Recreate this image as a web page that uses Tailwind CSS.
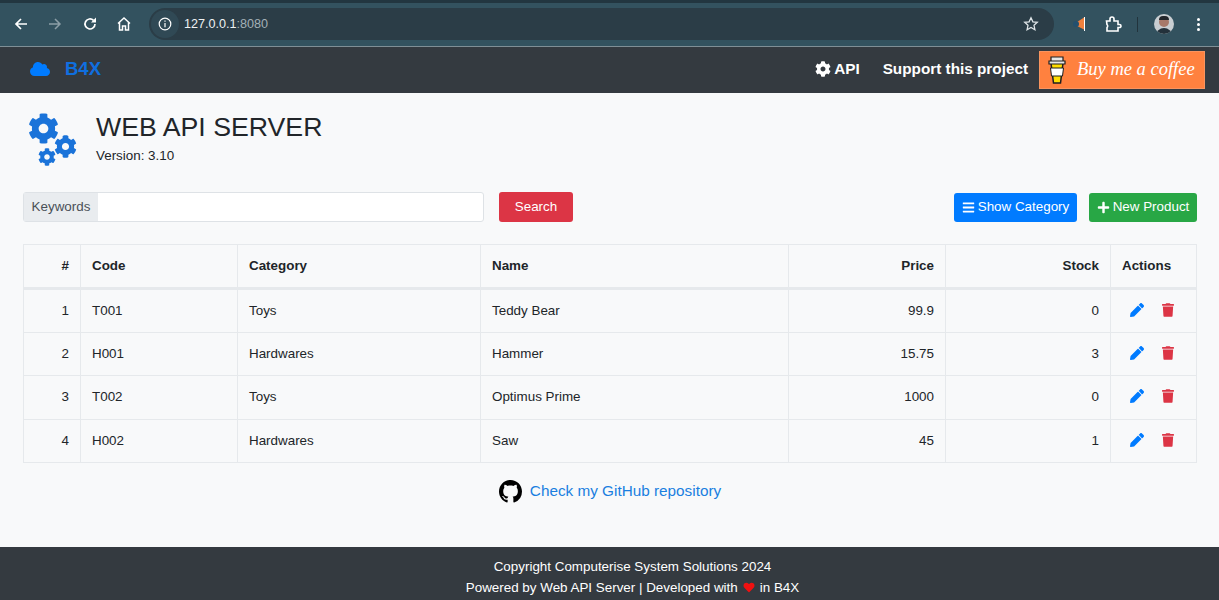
<!DOCTYPE html>
<html lang="en">

<head>
    <meta charset="UTF-8" />
    <title>Web API Server</title>
    <script src="https://cdn.jsdelivr.net/npm/@tailwindcss/browser@4"></script>
</head>

<body class="h-[600px] w-[1219px] overflow-hidden bg-[#f8f9fa] font-['Liberation_Sans',Arial,sans-serif] text-[13.400px] text-[#212529]">

    <svg class="hidden">
        <symbol id="cog" viewBox="0 0 512 512"><path fill="currentColor" d="M487.4 315.7l-42.6-24.6c4.3-23.2 4.3-47 0-70.2l42.6-24.6c4.9-2.8 7.1-8.6 5.5-14-11.1-35.6-30-67.8-54.7-94.6-3.8-4.1-10-5.1-14.8-2.3L380.8 110c-17.9-15.4-38.5-27.3-60.8-35.1V25.8c0-5.6-3.9-10.5-9.4-11.7-36.7-8.2-74.3-7.8-109.2 0-5.5 1.2-9.4 6.1-9.4 11.7V75c-22.2 7.9-42.8 19.8-60.8 35.1L88.7 85.5c-4.9-2.8-11-1.9-14.8 2.3-24.7 26.7-43.6 58.9-54.7 94.6-1.7 5.4.6 11.2 5.5 14L67.3 221c-4.3 23.2-4.3 47 0 70.2l-42.6 24.6c-4.9 2.8-7.1 8.6-5.5 14 11.1 35.6 30 67.8 54.7 94.6 3.8 4.1 10 5.1 14.8 2.3l42.6-24.6c17.9 15.4 38.5 27.3 60.8 35.1v49.2c0 5.6 3.9 10.5 9.4 11.7 36.7 8.2 74.3 7.8 109.2 0 5.5-1.2 9.4-6.1 9.4-11.7v-49.2c22.2-7.9 42.8-19.8 60.8-35.1l42.6 24.6c4.9 2.8 11 1.9 14.8-2.3 24.7-26.7 43.6-58.9 54.7-94.6 1.5-5.5-.7-11.3-5.6-14.1zM256 336c-44.1 0-80-35.9-80-80s35.9-80 80-80 80 35.9 80 80-35.9 80-80 80z"/></symbol>
        <symbol id="pencil" viewBox="0 0 512 512"><path fill="currentColor" d="M497.9 142.1l-46.1 46.1c-4.7 4.7-12.3 4.7-17 0l-111-111c-4.7-4.7-4.7-12.3 0-17l46.1-46.1c18.7-18.7 49.1-18.7 67.9 0l60.1 60.1c18.8 18.7 18.8 49.1 0 67.9zM284.2 99.8L21.6 362.4.4 483.9c-2.9 16.4 11.4 30.6 27.8 27.8l121.5-21.3 262.6-262.6c4.7-4.7 4.7-12.3 0-17l-111-111c-4.8-4.7-12.4-4.7-17.1 0z"/></symbol>
        <symbol id="trash" viewBox="0 0 448 512"><path fill="currentColor" d="M432 32H312l-9.4-18.7A24 24 0 0 0 281.1 0H166.8a23.72 23.72 0 0 0-21.4 13.3L136 32H16A16 16 0 0 0 0 48v32a16 16 0 0 0 16 16h416a16 16 0 0 0 16-16V48a16 16 0 0 0-16-16zM53.2 467a48 48 0 0 0 47.9 45h245.8a48 48 0 0 0 47.9-45L416 128H32z"/></symbol>
    </svg>

    <!-- browser toolbar -->
    <div class="relative flex h-[47px] items-center border-b border-[#7f8f96] bg-[#33525f] pt-[2px]">
        <div class="absolute left-0 top-0 h-[3px] w-full bg-[#223640]"></div>
        <div class="flex w-[149px] items-center text-white">
            <svg class="ml-[13px] h-[16px] w-[16px]" viewBox="0 0 16 16" fill="none" stroke="currentColor" stroke-width="1.7"><path d="M14 8H3M8 3L3 8l5 5" /></svg>
            <svg class="ml-[18px] h-[16px] w-[16px] text-[#8c9ea6]" viewBox="0 0 16 16" fill="none" stroke="currentColor" stroke-width="1.5"><path d="M2 8h11M8 3l5 5-5 5" /></svg>
            <svg class="ml-[19px] h-[16px] w-[16px]" viewBox="0 0 16 16" fill="none" stroke="currentColor" stroke-width="1.7"><path d="M13 8a5 5 0 1 1-1.5-3.6" /><path fill="currentColor" stroke="none" d="M14 1.5v5h-5z" /></svg>
            <svg class="ml-[18px] h-[16px] w-[16px]" viewBox="0 0 16 16" fill="none" stroke="currentColor" stroke-width="1.5"><path d="M2 7.5L8 2l6 5.5M3.5 6.5V14h3v-4h3v4h3V6.500" /></svg>
        </div>
        <div class="flex h-[32px] w-[905px] items-center rounded-full bg-[#2b3d47] text-[12.600px]">
            <div class="flex h-[28px] w-[28px] ml-[2px] items-center justify-center rounded-full bg-[#33525f]/60">
                <svg class="h-[14px] w-[14px] text-white" viewBox="0 0 14 14" fill="none" stroke="currentColor" stroke-width="1.2"><circle cx="7" cy="7" r="5.800" /><path d="M7 6v4.200M7 3.500v1.300" /></svg>
            </div>
            <span class="ml-[5px] text-[#eef2f3]">127.0.0.1<span class="text-[#a3b0b6]">:8080</span></span>
            <svg class="ml-auto mr-[15px] h-[16px] w-[16px] text-[#dfe5e8]" viewBox="0 0 16 16" fill="none" stroke="currentColor" stroke-width="1.3"><path d="M8 1.800l1.900 4 4.400.5-3.300 3 .9 4.400L8 11.500l-3.900 2.200.9-4.400-3.300-3 4.400-.5z" /></svg>
        </div>
        <div class="flex flex-1 items-center">
            <svg class="ml-[18px] h-[16px] w-[16px]" viewBox="0 0 16 16"><path fill="#f0803c" d="M5 6l7-4.500v12L5 10z" /><circle cx="4" cy="8" r="3" fill="#24506e" /><path d="M12.500 1v14" stroke="#fff" stroke-width="1" /></svg>
            <svg class="ml-[16px] h-[18px] w-[18px] text-white" viewBox="0 0 18 18" fill="none" stroke="currentColor" stroke-width="1.600"><path d="M2.500 6h3.500V4a2 2 0 0 1 4 0v2h4v3.500h1.500a1.500 1.500 0 0 1 0 3H14V16H3v-3.500a2 2 0 0 0 0-3z" /></svg>
            <div class="ml-[15px] h-[15px] w-[1px] bg-[#22343d]"></div>
            <div class="relative ml-[16px] h-[20px] w-[20px] overflow-hidden rounded-full bg-[#c9ced2]">
                <div class="absolute left-[5px] top-[3px] h-[10px] w-[10px] rounded-full bg-[#a8796a]"></div>
                <div class="absolute left-[5px] top-[2px] h-[4px] w-[10px] rounded-t-full bg-[#23262b]"></div>
                <div class="absolute left-[2px] top-[14px] h-[8px] w-[16px] rounded-t-full bg-[#23313b]"></div>
            </div>
            <div class="ml-[23px] flex flex-col gap-[2px]">
                <div class="h-[3px] w-[3px] rounded-full bg-white"></div>
                <div class="h-[3px] w-[3px] rounded-full bg-white"></div>
                <div class="h-[3px] w-[3px] rounded-full bg-white"></div>
            </div>
        </div>
    </div>

    <!-- navbar -->
    <nav class="flex h-[46px] items-center bg-[#343a40] pb-[2px] pl-[30px] pr-[14px]">
        <svg class="h-[16px] w-[20px] text-[#007bff]" viewBox="0 0 640 512"><path fill="currentColor" d="M537.6 226.6c4.1-10.700 6.400-22.400 6.400-34.600 0-53-43-96-96-96-19.700 0-38.100 6-53.300 16.200C367 64.200 315.300 32 256 32c-88.400 0-160 71.600-160 160 0 2.700.1 5.400.2 8.100C40.200 219.800 0 273.200 0 336c0 79.500 64.500 144 144 144h368c70.700 0 128-57.300 128-128 0-61.900-44-113.600-102.400-125.400z" /></svg>
        <span class="ml-[15px] text-[18.500px] font-bold text-[#0f6fe0]">B4X</span>
        <a class="ml-auto flex items-center text-[15.300px] font-bold text-white">
            <svg class="mr-[3px] h-[16px] w-[16px]"><use href="#cog" /></svg>API
        </a>
        <span class="ml-[23px] text-[15.300px] font-bold text-white">Support this project</span>
        <div class="mt-[2px] ml-[11px] flex h-[38px] w-[166px] items-center border border-[#e0e0e0]/20 bg-[#ff813f] pl-[7px]">
            <svg class="h-[30px] w-[20px]" viewBox="0 0 20 30">
                <path d="M4 8l2.500 20h7L16 8z" fill="#ffdd00" stroke="#1f1f1f" stroke-width="1.500" />
                <path d="M3.500 13h13l-1 8h-11z" fill="#fff" stroke="#1f1f1f" stroke-width="1" />
                <path d="M2 6h16v3H2zM4 2h12v4H4z" fill="#e6e6e6" stroke="#1f1f1f" stroke-width="1.200" />
            </svg>
            <span class="ml-[10px] whitespace-nowrap font-['Liberation_Serif',serif] text-[18.500px] italic text-white">Buy me a coffee</span>
        </div>
    </nav>

    <!-- page heading -->
    <header class="flex px-[23px] pt-[18px]">
        <svg class="h-[58px] w-[56px] text-[#1a73d9]" viewBox="0 0 56 58">
            <use href="#cog" x="5" y="2" width="31" height="31" />
            <use href="#cog" x="31" y="24" width="23" height="23" />
            <use href="#cog" x="15" y="37" width="18" height="18" />
        </svg>
        <div class="ml-[17px]">
            <h1 class="text-[26.700px] leading-[32px] text-[#212529]">WEB API SERVER</h1>
            <p class="mt-[3px] leading-[20px]">Version: 3.10</p>
        </div>
    </header>

    <!-- toolbar -->
    <div class="mt-[23px] flex items-center pl-[23px] pr-[22px]">
        <div class="flex h-[30px] w-[461px] rounded-[3px] border border-[#dee2e6] bg-white">
            <span class="flex w-[74px] items-center justify-center bg-[#e9ecef] text-[#495057]">Keywords</span>
        </div>
        <button class="ml-[15px] h-[30px] w-[74px] rounded-[3px] bg-[#dc3545] text-white">Search</button>
        <button class="ml-auto flex h-[29px] w-[123px] items-center justify-center rounded-[3px] bg-[#007bff] text-white">
            <svg class="mr-[3px] h-[13px] w-[13px]" viewBox="0 0 448 512"><path fill="currentColor" d="M16 132h416c8.837 0 16-7.163 16-16V76c0-8.837-7.163-16-16-16H16C7.163 60 0 67.163 0 76v40c0 8.837 7.163 16 16 16zm0 160h416c8.837 0 16-7.163 16-16v-40c0-8.837-7.163-16-16-16H16c-8.837 0-16 7.163-16 16v40c0 8.837 7.163 16 16 16zm0 160h416c8.837 0 16-7.163 16-16v-40c0-8.837-7.163-16-16-16H16c-8.837 0-16 7.163-16 16v40c0 8.837 7.163 16 16 16z" /></svg>Show Category
        </button>
        <button class="ml-[12px] flex h-[29px] w-[108px] items-center justify-center rounded-[3px] bg-[#28a745] text-white">
            <svg class="mr-[3px] h-[13px] w-[13px]" viewBox="0 0 448 512"><path fill="currentColor" d="M416 208H272V64c0-17.670-14.330-32-32-32h-32c-17.670 0-32 14.330-32 32v144H32c-17.670 0-32 14.330-32 32v32c0 17.670 14.330 32 32 32h144v144c0 17.670 14.330 32 32 32h32c17.670 0 32-14.330 32-32V304h144c17.670 0 32-14.330 32-32v-32c0-17.670-14.330-32-32-32z" /></svg>New Product
        </button>
    </div>

    <!-- products -->
    <div class="mt-[22px] px-[23px]">
        <table class="w-[1173px] table-fixed border-collapse">
            <colgroup>
                <col class="w-[57px]" />
                <col class="w-[157px]" />
                <col class="w-[243px]" />
                <col class="w-[308px]" />
                <col class="w-[157px]" />
                <col class="w-[165px]" />
                <col class="w-[86px]" />
            </colgroup>
            <thead>
                <tr class="h-[44px] border-b-[3px] border-[#dee2e6] font-bold">
                    <th class="border border-b-[3px] border-[#e6e9ec] px-[11px] text-right">#</th>
                    <th class="border border-b-[3px] border-[#e6e9ec] px-[11px] text-left">Code</th>
                    <th class="border border-b-[3px] border-[#e6e9ec] px-[11px] text-left">Category</th>
                    <th class="border border-b-[3px] border-[#e6e9ec] px-[11px] text-left">Name</th>
                    <th class="border border-b-[3px] border-[#e6e9ec] px-[11px] text-right">Price</th>
                    <th class="border border-b-[3px] border-[#e6e9ec] px-[11px] text-right">Stock</th>
                    <th class="border border-b-[3px] border-[#e6e9ec] px-[11px] text-left">Actions</th>
                </tr>
            </thead>
            <tbody>
                <tr class="h-[43.500px]">
                    <td class="border border-[#e6e9ec] px-[11px] text-right">1</td>
                    <td class="border border-[#e6e9ec] px-[11px]">T001</td>
                    <td class="border border-[#e6e9ec] px-[11px]">Toys</td>
                    <td class="border border-[#e6e9ec] px-[11px]">Teddy Bear</td>
                    <td class="border border-[#e6e9ec] px-[11px] text-right">99.9</td>
                    <td class="border border-[#e6e9ec] px-[11px] text-right">0</td>
                    <td class="border border-[#e6e9ec] px-[11px]">
                        <div class="flex items-center pb-[2px] pl-[8px]">
                            <svg class="h-[14px] w-[14px] text-[#007bff]"><use href="#pencil" /></svg>
                            <svg class="ml-[18px] h-[14px] w-[12px] text-[#dc3545]"><use href="#trash" /></svg>
                        </div>
                    </td>
                </tr>
                <tr class="h-[43.500px]">
                    <td class="border border-[#e6e9ec] px-[11px] text-right">2</td>
                    <td class="border border-[#e6e9ec] px-[11px]">H001</td>
                    <td class="border border-[#e6e9ec] px-[11px]">Hardwares</td>
                    <td class="border border-[#e6e9ec] px-[11px]">Hammer</td>
                    <td class="border border-[#e6e9ec] px-[11px] text-right">15.75</td>
                    <td class="border border-[#e6e9ec] px-[11px] text-right">3</td>
                    <td class="border border-[#e6e9ec] px-[11px]">
                        <div class="flex items-center pb-[2px] pl-[8px]">
                            <svg class="h-[14px] w-[14px] text-[#007bff]"><use href="#pencil" /></svg>
                            <svg class="ml-[18px] h-[14px] w-[12px] text-[#dc3545]"><use href="#trash" /></svg>
                        </div>
                    </td>
                </tr>
                <tr class="h-[43.500px]">
                    <td class="border border-[#e6e9ec] px-[11px] text-right">3</td>
                    <td class="border border-[#e6e9ec] px-[11px]">T002</td>
                    <td class="border border-[#e6e9ec] px-[11px]">Toys</td>
                    <td class="border border-[#e6e9ec] px-[11px]">Optimus Prime</td>
                    <td class="border border-[#e6e9ec] px-[11px] text-right">1000</td>
                    <td class="border border-[#e6e9ec] px-[11px] text-right">0</td>
                    <td class="border border-[#e6e9ec] px-[11px]">
                        <div class="flex items-center pb-[2px] pl-[8px]">
                            <svg class="h-[14px] w-[14px] text-[#007bff]"><use href="#pencil" /></svg>
                            <svg class="ml-[18px] h-[14px] w-[12px] text-[#dc3545]"><use href="#trash" /></svg>
                        </div>
                    </td>
                </tr>
                <tr class="h-[43.500px]">
                    <td class="border border-[#e6e9ec] px-[11px] text-right">4</td>
                    <td class="border border-[#e6e9ec] px-[11px]">H002</td>
                    <td class="border border-[#e6e9ec] px-[11px]">Hardwares</td>
                    <td class="border border-[#e6e9ec] px-[11px]">Saw</td>
                    <td class="border border-[#e6e9ec] px-[11px] text-right">45</td>
                    <td class="border border-[#e6e9ec] px-[11px] text-right">1</td>
                    <td class="border border-[#e6e9ec] px-[11px]">
                        <div class="flex items-center pb-[2px] pl-[8px]">
                            <svg class="h-[14px] w-[14px] text-[#007bff]"><use href="#pencil" /></svg>
                            <svg class="ml-[18px] h-[14px] w-[12px] text-[#dc3545]"><use href="#trash" /></svg>
                        </div>
                    </td>
                </tr>
            </tbody>
        </table>
    </div>

    <!-- repo link -->
    <div class="mt-[16px] flex h-[24px] items-center justify-center pl-[1px]">
        <svg class="mr-[8px] h-[23px] w-[23px] text-black" viewBox="0 0 16 16"><path fill="currentColor" d="M8 0C3.580 0 0 3.580 0 8c0 3.540 2.290 6.530 5.470 7.590.4.070.55-.17.55-.38 0-.19-.01-.82-.01-1.490-2.010.37-2.530-.49-2.690-.94-.09-.23-.48-.94-.82-1.130-.28-.15-.68-.52-.01-.53.63-.01 1.080.58 1.230.82.72 1.210 1.870.87 2.330.66.070-.52.28-.87.51-1.070-1.780-.2-3.640-.89-3.640-3.950 0-.87.31-1.590.82-2.150-.08-.2-.36-1.020.08-2.120 0 0 .67-.21 2.200.82.64-.18 1.320-.27 2-.27.68 0 1.360.09 2 .27 1.530-1.040 2.200-.82 2.200-.82.44 1.100.16 1.920.08 2.120.51.56.82 1.270.82 2.150 0 3.070-1.870 3.750-3.650 3.950.29.25.54.73.54 1.480 0 1.070-.01 1.930-.01 2.200 0 .21.15.46.55.38A8.013 8.013 0 0016 8c0-4.420-3.580-8-8-8z" /></svg>
        <a class="text-[15.300px] text-[#1a7fe0]">Check my GitHub repository</a>
    </div>

    <!-- footer -->
    <footer class="fixed bottom-0 left-0 flex h-[53px] w-full flex-col items-center justify-center bg-[#343a40] pl-[46px] pt-[8px] text-[13.400px] leading-[20.500px] text-white">
        <p>Copyright Computerise System Solutions 2024</p>
        <p class="flex items-center">Powered by Web API Server | Developed with
            <svg class="mx-[5px] h-[11px] w-[12px] text-[#f01010]" viewBox="0 0 512 512"><path fill="currentColor" d="M462.300 62.600C407.500 15.900 326 24.300 275.700 76.200L256 96.500l-19.700-20.300C186.100 24.300 104.500 15.900 49.700 62.600c-62.800 53.600-66.100 149.800-9.900 207.900l193.500 199.800c12.500 12.900 32.800 12.900 45.300 0l193.500-199.800c56.300-58.100 53-154.300-9.800-207.900z" /></svg>
            in B4X</p>
    </footer>

</body>

</html>
